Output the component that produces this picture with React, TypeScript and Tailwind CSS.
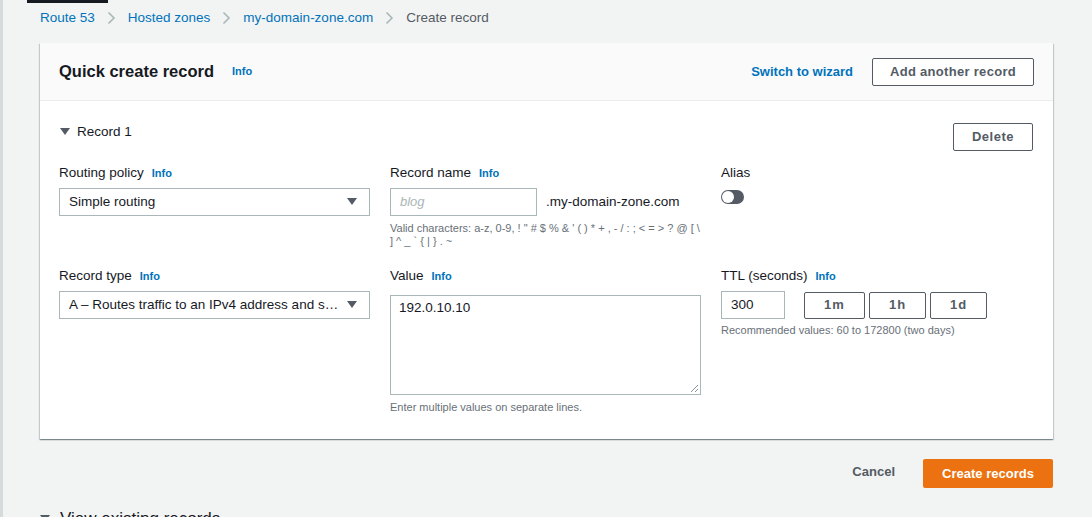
import React from "react";

const Info = () => <span className="ml-2 text-[11px] font-bold text-[#0073bb]">Info</span>;

const Caret = () => (
  <svg width="10" height="8" viewBox="0 0 10 8" className="shrink-0">
    <path d="M0 0h10L5 7z" fill="#545b64" />
  </svg>
);

const Chevron = () => (
  <svg width="9" height="14" viewBox="0 0 9 14" className="mx-[12px]">
    <path d="M1.5 1.5 7 7l-5.5 5.5" fill="none" stroke="#aab7b8" strokeWidth="1.6" />
  </svg>
);

function Select({ value }: { value: string }) {
  return (
    <div className="flex h-[28px] items-center justify-between border border-[#aab7b8] bg-white pl-[9px] pr-[12px] text-[13.5px] text-[#16191f]">
      <span className="truncate pr-2">{value}</span>
      <Caret />
    </div>
  );
}

function Label({ text }: { text: string }) {
  return (
    <div className="mb-[7px] flex items-center text-[13.5px] leading-[16px] text-[#16191f]">
      {text}
      <Info />
    </div>
  );
}

export default function App() {
  return (
    <div
      className="relative h-[517px] w-[1092px] overflow-hidden border-l-[3px] border-[#d5dbdb] bg-[#f2f3f3] text-[#16191f]"
      style={{ fontFamily: '"Liberation Sans", Arial, sans-serif' }}
    >
      <div className="absolute left-[24px] top-0 h-[3px] w-[81px] bg-[#16191f]" />
      {/* breadcrumb */}
      <div className="ml-[37px] flex h-[36px] items-center text-[13.5px]">
        <span className="text-[#0073bb]">Route 53</span>
        <Chevron />
        <span className="text-[#0073bb]">Hosted zones</span>
        <Chevron />
        <span className="text-[#0073bb]">my-domain-zone.com</span>
        <Chevron />
        <span className="text-[#545b64]">Create record</span>
      </div>

      {/* card */}
      <div className="ml-[37px] mt-[7px] w-[1013px] bg-white shadow-[0_1px_1px_0_rgba(0,28,36,0.3),1px_1px_1px_0_rgba(0,28,36,0.15),-1px_1px_1px_0_rgba(0,28,36,0.15)]">
        <div className="flex h-[58px] items-center justify-between border-b border-[#eaeded] bg-[#fafafa] pl-[19px] pr-[19px]">
          <div className="flex items-center">
            <span className="text-[16.5px] font-bold">Quick create record</span>
            <span className="ml-[18px] text-[11px] font-bold text-[#0073bb]">Info</span>
          </div>
          <div className="flex items-center">
            <span className="text-[13px] font-bold text-[#0073bb]">Switch to wizard</span>
            <button className="ml-[19px] h-[28px] w-[162px] rounded-[2px] border border-[#545b64] bg-white text-[13px] font-bold tracking-[0.3px] text-[#545b64]">
              Add another record
            </button>
          </div>
        </div>

        <div className="pb-[25px] pl-[19px] pr-[20px] pt-[22px]">
          <div className="flex items-start justify-between">
            <div className="mt-[1px] flex items-center gap-[7px] pl-[1px] text-[13.5px] leading-[16px]">
              <Caret />
              Record 1
            </div>
            <button className="h-[28px] w-[80px] rounded-[2px] border border-[#545b64] bg-white text-[13px] font-bold tracking-[0.5px] text-[#545b64]">
              Delete
            </button>
          </div>

          <div className="mt-[14px] grid grid-cols-[311px_311px_312px] gap-x-[20px]">
            {/* row 1 */}
            <div>
              <Label text="Routing policy" />
              <Select value="Simple routing" />
            </div>
            <div>
              <Label text="Record name" />
              <div className="flex items-center">
                <div className="flex h-[28px] w-[147px] items-center border border-[#aab7b8] pl-[9px] text-[13px] italic text-[#aab7b8]">
                  blog
                </div>
                <span className="ml-[9px] text-[13.5px]">.my-domain-zone.com</span>
              </div>
              <div className="mt-[6px] text-[11px] leading-[13px] text-[#687078]">
                Valid characters: a-z, 0-9, ! " # $ % &amp; ' ( ) * + , - / : ; &lt; = &gt; ? @ [ \ ] ^ _ ` {"{"} | {"}"} . ~
              </div>
            </div>
            <div>
              <div className="mb-[9px] text-[13.5px] leading-[16px]">Alias</div>
              <div className="relative h-[14px] w-[23px] rounded-full bg-[#545b64]">
                <div className="absolute left-[1px] top-[1px] h-[12px] w-[12px] rounded-full bg-white" />
              </div>
            </div>

            {/* row 2 */}
            <div className="mt-[20px]">
              <Label text="Record type" />
              <Select value="A – Routes traffic to an IPv4 address and some AWS resources" />
            </div>
            <div className="mt-[20px]">
              <Label text="Value" />
              <div className="relative mt-[11px] h-[100px] border border-[#aab7b8] px-[8px] pt-[2px] text-[13.5px]">
                192.0.10.10
                <svg width="10" height="10" viewBox="0 0 10 10" className="absolute bottom-[1px] right-[1px]">
                  <path d="M9 2 2 9M9 6 6 9" stroke="#879596" strokeWidth="1" />
                </svg>
              </div>
              <div className="mt-[6px] text-[11px] leading-[13px] text-[#687078]">Enter multiple values on separate lines.</div>
            </div>
            <div className="mt-[20px]">
              <Label text="TTL (seconds)" />
              <div className="flex items-center">
                <div className="flex h-[28px] w-[64px] items-center border border-[#aab7b8] pl-[9px] text-[13.5px]">300</div>
                <div className="ml-[19px] flex gap-[4px]">
                  {["1m", "1h", "1d"].map((t, i) => (
                    <button
                      key={t}
                      className={`h-[27px] rounded-[2px] border border-[#545b64] bg-white text-[13px] font-bold tracking-[1px] text-[#545b64] ${i === 0 ? "w-[61px]" : "w-[57px]"}`}
                    >
                      {t}
                    </button>
                  ))}
                </div>
              </div>
              <div className="mt-[5px] text-[11px] leading-[13px] text-[#687078]">Recommended values: 60 to 172800 (two days)</div>
            </div>
          </div>
        </div>
      </div>

      {/* footer actions */}
      <div className="mt-[20px] flex w-[1050px] items-center justify-end">
        <span className="mb-[4px] text-[13px] font-bold text-[#545b64]">Cancel</span>
        <button className="ml-[28px] h-[29px] w-[130px] rounded-[2px] bg-[#ec7211] text-[13px] font-bold text-white">
          Create records
        </button>
      </div>

      <div className="ml-[37px] mt-[21px] flex items-center gap-[10px] text-[17px] leading-[20px]">
        <Caret />
        View existing records
      </div>
    </div>
  );
}
